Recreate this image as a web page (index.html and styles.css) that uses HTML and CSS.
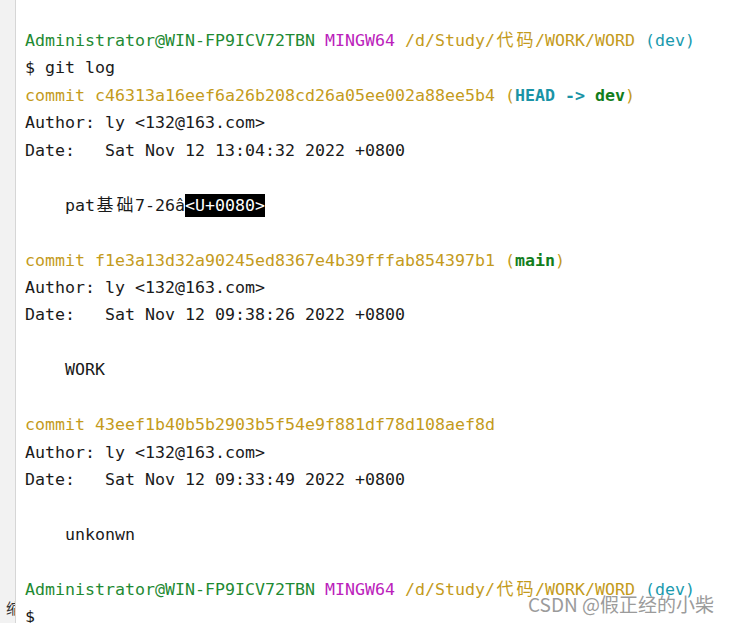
FILE: index.html
```html
<!DOCTYPE html>
<html lang="zh">
<head>
<meta charset="utf-8">
<title>git log</title>
<link rel="stylesheet" href="styles.css">
</head>
<body>
<div class="window">
  <div class="gutter"><span class="gutter-mark">缩</span></div>
  <pre class="term"><span class="g">Administrator@WIN-FP9ICV72TBN</span> <span class="m">MINGW64</span> <span class="y">/d/Study/<span class="w">代</span><span class="w">码</span>/WORK/WORD</span> <span class="c">(dev)</span>
$ git log
<span class="y">commit c46313a16eef6a26b208cd26a05ee002a88ee5b4 (</span><span class="cb">HEAD -&gt; </span><span class="gb">dev</span><span class="y">)</span>
Author: ly &lt;132@163.com&gt;
Date:   Sat Nov 12 13:04:32 2022 +0800

    pat<span class="w">基</span><span class="w">础</span>7-26â<span class="inv">&lt;U+0080&gt;</span>

<span class="y">commit f1e3a13d32a90245ed8367e4b39fffab854397b1 (</span><span class="gb">main</span><span class="y">)</span>
Author: ly &lt;132@163.com&gt;
Date:   Sat Nov 12 09:38:26 2022 +0800

    WORK

<span class="y">commit 43eef1b40b5b2903b5f54e9f881df78d108aef8d</span>
Author: ly &lt;132@163.com&gt;
Date:   Sat Nov 12 09:33:49 2022 +0800

    unkonwn

<span class="g">Administrator@WIN-FP9ICV72TBN</span> <span class="m">MINGW64</span> <span class="y">/d/Study/<span class="w">代</span><span class="w">码</span>/WORK/WORD</span> <span class="c">(dev)</span>
$</pre>
  <div class="watermark">CSDN @假正经的小柴</div>
</div>
</body>
</html>
```

FILE: styles.css
```css
html, body {
  margin: 0;
  padding: 0;
  background: #ffffff;
}

.window {
  position: relative;
  display: flex;
  width: 734px;
  height: 623px;
  overflow: hidden;
  background: #ffffff;
}

.gutter {
  position: relative;
  flex: 0 0 15px;
  background: #f2f2f2;
  border-right: 1px solid #d6d6d6;
}

.gutter-mark {
  position: absolute;
  left: 6px;
  top: 598px;
  width: 9px;
  overflow: hidden;
  font-family: "Noto Sans CJK SC", sans-serif;
  font-size: 15px;
  line-height: 20px;
  color: #333333;
}

.term {
  margin: 0;
  padding: 27px 0 0 9px;
  font-family: "DejaVu Sans Mono", monospace;
  font-size: 16.61px;
  line-height: 27.43px;
  color: #1a1a1a;
  white-space: pre;
}

.w {
  display: inline-block;
  width: 20px;
  line-height: 16px;
  text-align: center;
  font-family: "Noto Sans CJK SC", sans-serif;
  font-size: 17px;
}

.g { color: #1f8a33; }
.m { color: #bb22bb; }
.y { color: #c49b1c; }
.c { color: #1a9aae; }
.cb { color: #1a93a6; font-weight: bold; }
.gb { color: #127d1c; font-weight: bold; }

.inv {
  background: #000000;
  color: #ffffff;
  padding: 2px 0;
}

.watermark {
  position: absolute;
  left: 528px;
  top: 592px;
  font-family: "Noto Sans CJK SC", sans-serif;
  font-size: 19px;
  line-height: 24px;
  color: #9b9b9b;
  text-shadow: 0 0 1px #ffffff;
  white-space: nowrap;
}
```
